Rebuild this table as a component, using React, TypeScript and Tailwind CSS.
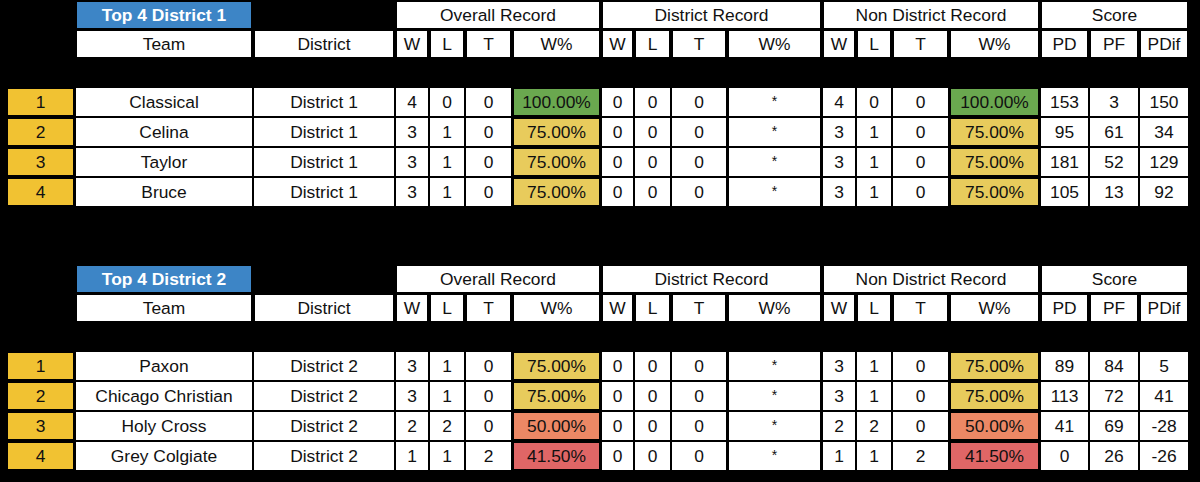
import React from 'react';

type Row = {
  rank: number;
  team: string;
  district: string;
  overall: [number, number, number, string];
  nonDistrict: [number, number, number, string];
  score: [number, number, number];
};

// column tracks: each cell sits inside its track with a small inset
const cols =
  'grid-cols-[69px_178px_142px_34px_36px_47px_89px_33px_37px_56px_95px_34px_36px_57px_91px_49px_50px_50px]';

const pctColor: Record<string, string> = {
  '100.00%': 'bg-[#6aa84f]',
  '75.00%': 'bg-[#e8cb5c]',
  '50.00%': 'bg-[#ec8865]',
  '41.50%': 'bg-[#e06666]',
};

const sections: { title: string; rows: Row[] }[] = [
  {
    title: 'Top 4 District 1',
    rows: [
      { rank: 1, team: 'Classical', district: 'District 1', overall: [4, 0, 0, '100.00%'], nonDistrict: [4, 0, 0, '100.00%'], score: [153, 3, 150] },
      { rank: 2, team: 'Celina', district: 'District 1', overall: [3, 1, 0, '75.00%'], nonDistrict: [3, 1, 0, '75.00%'], score: [95, 61, 34] },
      { rank: 3, team: 'Taylor', district: 'District 1', overall: [3, 1, 0, '75.00%'], nonDistrict: [3, 1, 0, '75.00%'], score: [181, 52, 129] },
      { rank: 4, team: 'Bruce', district: 'District 1', overall: [3, 1, 0, '75.00%'], nonDistrict: [3, 1, 0, '75.00%'], score: [105, 13, 92] },
    ],
  },
  {
    title: 'Top 4 District 2',
    rows: [
      { rank: 1, team: 'Paxon', district: 'District 2', overall: [3, 1, 0, '75.00%'], nonDistrict: [3, 1, 0, '75.00%'], score: [89, 84, 5] },
      { rank: 2, team: 'Chicago Christian', district: 'District 2', overall: [3, 1, 0, '75.00%'], nonDistrict: [3, 1, 0, '75.00%'], score: [113, 72, 41] },
      { rank: 3, team: 'Holy Cross', district: 'District 2', overall: [2, 2, 0, '50.00%'], nonDistrict: [2, 2, 0, '50.00%'], score: [41, 69, -28] },
      { rank: 4, team: 'Grey Colgiate', district: 'District 2', overall: [1, 1, 2, '41.50%'], nonDistrict: [1, 1, 2, '41.50%'], score: [0, 26, -26] },
    ],
  },
];

function HeadCell({ children, span = '' }: { children?: React.ReactNode; span?: string }) {
  return (
    <div className={`${span} px-[2px]`}>
      <div className="h-full bg-white flex items-center justify-center">{children}</div>
    </div>
  );
}

function Cell({ children }: { children: React.ReactNode }) {
  return (
    <div className="px-[1px] py-[1px]">
      <div className="h-full bg-white flex items-center justify-center">{children}</div>
    </div>
  );
}

function ColorCell({ children, color }: { children: React.ReactNode; color: string }) {
  return (
    <div className="px-[2px] py-[2px]">
      <div className={`h-full ${color} flex items-center justify-center`}>{children}</div>
    </div>
  );
}

function Section({ title, rows }: { title: string; rows: Row[] }) {
  const subHeads = ['W', 'L', 'T', 'W%'];
  return (
    <div className="flex flex-col">
      <div className={`grid ${cols} h-[25px]`}>
        <div />
        <div className="px-[2px]">
          <div className="h-full bg-[#3d85c6] text-white font-bold flex items-center justify-center">{title}</div>
        </div>
        <div />
        <HeadCell span="col-span-4">Overall Record</HeadCell>
        <HeadCell span="col-span-4">District Record</HeadCell>
        <HeadCell span="col-span-4">Non District Record</HeadCell>
        <HeadCell span="col-span-3">Score</HeadCell>
      </div>
      <div className={`grid ${cols} h-[26px] mt-[4px]`}>
        <div />
        <HeadCell>Team</HeadCell>
        <HeadCell>District</HeadCell>
        {[0, 1, 2].flatMap((g) => subHeads.map((h) => <HeadCell key={`${g}${h}`}>{h}</HeadCell>))}
        <HeadCell>PD</HeadCell>
        <HeadCell>PF</HeadCell>
        <HeadCell>PDif</HeadCell>
      </div>
      <div className="mt-[30px] flex flex-col">
        {rows.map((r) => (
          <div key={r.rank} className={`grid ${cols} h-[30px]`}>
            <ColorCell color="bg-[#f1c232]">{r.rank}</ColorCell>
            <Cell>{r.team}</Cell>
            <Cell>{r.district}</Cell>
            <Cell>{r.overall[0]}</Cell>
            <Cell>{r.overall[1]}</Cell>
            <Cell>{r.overall[2]}</Cell>
            <ColorCell color={pctColor[r.overall[3]]}>{r.overall[3]}</ColorCell>
            <Cell>0</Cell>
            <Cell>0</Cell>
            <Cell>0</Cell>
            <div className="px-[2px] py-[1px]">
              <div className="h-full bg-white flex items-start justify-center text-[14px] pt-[3px]">*</div>
            </div>
            <Cell>{r.nonDistrict[0]}</Cell>
            <Cell>{r.nonDistrict[1]}</Cell>
            <Cell>{r.nonDistrict[2]}</Cell>
            <ColorCell color={pctColor[r.nonDistrict[3]]}>{r.nonDistrict[3]}</ColorCell>
            <Cell>{r.score[0]}</Cell>
            <Cell>{r.score[1]}</Cell>
            <Cell>{r.score[2]}</Cell>
          </div>
        ))}
      </div>
    </div>
  );
}

export default function App() {
  return (
    <div className="w-[1200px] h-[482px] bg-black pl-[6px] pt-[2px] text-[17.4px] text-[#111] font-['Liberation_Sans',Arial,sans-serif] flex flex-col gap-[59px]">
      {sections.map((s) => (
        <Section key={s.title} title={s.title} rows={s.rows} />
      ))}
    </div>
  );
}
